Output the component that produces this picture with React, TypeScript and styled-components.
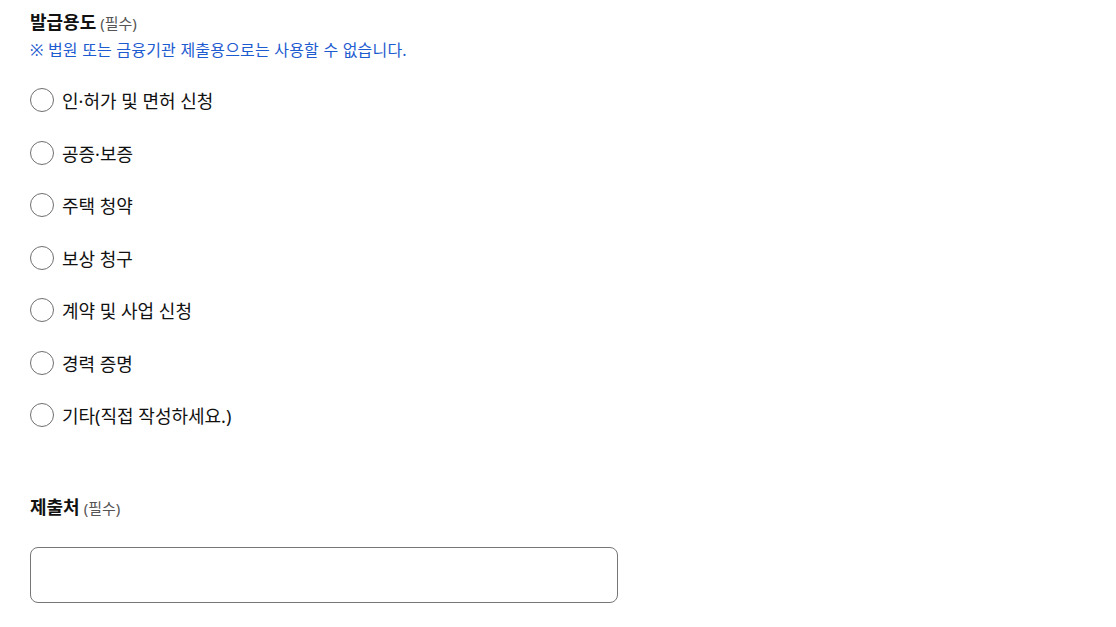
import styled, { createGlobalStyle } from "styled-components";

const GlobalStyle = createGlobalStyle`
  body {
    margin: 0;
    background: #ffffff;
    font-family: "Noto Sans", "Noto Sans CJK KR", sans-serif;
    color: #111111;
  }
`;

const OPTIONS = [
  "인·허가 및 면허 신청",
  "공증·보증",
  "주택 청약",
  "보상 청구",
  "계약 및 사업 신청",
  "경력 증명",
  "기타(직접 작성하세요.)",
];

const Page = styled.div`
  padding: 8px 30px 0 30px;
  display: flex;
  flex-direction: column;
`;

const Section = styled.section`
  display: flex;
  flex-direction: column;
`;

const Label = styled.div`
  font-size: 18px;
  font-weight: 700;
  line-height: 28px;
  color: #111111;
`;

const Required = styled.span`
  font-size: 15px;
  font-weight: 400;
  color: #555555;
  margin-left: 4px;
`;

const Note = styled.p`
  margin: 0;
  font-size: 16px;
  line-height: 26px;
  letter-spacing: 0.2px;
  color: #1d5bd0;
`;

const RadioList = styled.div`
  display: flex;
  flex-direction: column;
  margin-top: 11px;
`;

const RadioRow = styled.label`
  display: flex;
  align-items: center;
  gap: 8px;
  height: 52.5px;
  font-size: 18px;
  color: #111111;
  cursor: pointer;
`;

const RadioCircle = styled.span`
  width: 22px;
  height: 22px;
  border: 1px solid #6f6f6f;
  border-radius: 50%;
  background: #ffffff;
  flex-shrink: 0;
`;

const SubmitSection = styled(Section)`
  margin-top: 51px;
`;

const TextBox = styled.input`
  margin-top: 25px;
  width: 588px;
  height: 56px;
  box-sizing: border-box;
  border: 1px solid #767676;
  border-radius: 8px;
  padding: 0 16px;
  font-size: 16px;
  font-family: inherit;
  outline: none;
`;

export default function App() {
  return (
    <>
      <GlobalStyle />
      <Page>
        <Section>
          <Label>
            발급용도<Required>(필수)</Required>
          </Label>
          <Note>※ 법원 또는 금융기관 제출용으로는 사용할 수 없습니다.</Note>
          <RadioList>
            {OPTIONS.map((opt) => (
              <RadioRow key={opt}>
                <RadioCircle />
                {opt}
              </RadioRow>
            ))}
          </RadioList>
        </Section>
        <SubmitSection>
          <Label>
            제출처<Required>(필수)</Required>
          </Label>
          <TextBox />
        </SubmitSection>
      </Page>
    </>
  );
}
